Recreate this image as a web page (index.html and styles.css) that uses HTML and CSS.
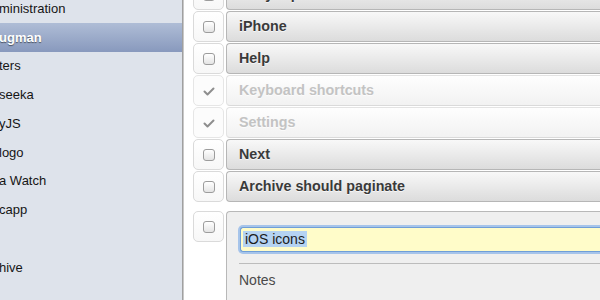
FILE: index.html
```html
<!DOCTYPE html>
<html>
<head>
<meta charset="utf-8">
<link rel="stylesheet" href="styles.css">
</head>
<body>
<div class="app">
  <nav class="sidebar">
    <ul class="projects">
      <li class="project">ministration</li>
      <li class="project is-selected">ugman</li>
      <li class="project">ters</li>
      <li class="project">seeka</li>
      <li class="project">yJS</li>
      <li class="project">logo</li>
      <li class="project">a Watch</li>
      <li class="project">capp</li>
      <li class="project"></li>
      <li class="project">hive</li>
    </ul>
  </nav>
  <main class="tasks">
    <ul class="task-list">
      <li class="task">
        <span class="task-check"><span class="checkbox"></span></span>
        <span class="task-title">Daily reports</span>
      </li>
      <li class="task">
        <span class="task-check"><span class="checkbox"></span></span>
        <span class="task-title">iPhone</span>
      </li>
      <li class="task">
        <span class="task-check"><span class="checkbox"></span></span>
        <span class="task-title">Help</span>
      </li>
      <li class="task is-done">
        <span class="task-check"><svg class="check-icon" viewBox="0 0 12 9" width="12" height="9"><path d="M1.5 4.5 L4.5 7.5 L10.5 1.5" fill="none" stroke="#8e8e8e" stroke-width="2" stroke-linecap="round" stroke-linejoin="round"/></svg></span>
        <span class="task-title">Keyboard shortcuts</span>
      </li>
      <li class="task is-done">
        <span class="task-check"><svg class="check-icon" viewBox="0 0 12 9" width="12" height="9"><path d="M1.5 4.5 L4.5 7.5 L10.5 1.5" fill="none" stroke="#8e8e8e" stroke-width="2" stroke-linecap="round" stroke-linejoin="round"/></svg></span>
        <span class="task-title">Settings</span>
      </li>
      <li class="task">
        <span class="task-check"><span class="checkbox"></span></span>
        <span class="task-title">Next</span>
      </li>
      <li class="task">
        <span class="task-check"><span class="checkbox"></span></span>
        <span class="task-title">Archive should paginate</span>
      </li>
    </ul>
    <div class="task-edit">
      <span class="task-check"><span class="checkbox"></span></span>
      <div class="edit-panel">
        <div class="title-input"><span class="selection">iOS icons</span></div>
        <div class="separator"></div>
        <div class="notes">Notes</div>
      </div>
    </div>
  </main>
</div>
</body>
</html>
```
FILE: styles.css
```css
html, body {
  margin: 0;
  padding: 0;
  width: 600px;
  height: 300px;
  overflow: hidden;
  background: #fff;
  font-family: "Liberation Sans", Arial, sans-serif;
}

.app {
  display: flex;
  height: 300px;
}

.sidebar {
  flex: none;
  width: 182px;
  height: 300px;
  background: #dee3eb;
  border-right: 1px solid #a0a0a0;
  box-shadow: 1px 0 0 #c8c8c8;
  overflow: hidden;
}

.projects {
  list-style: none;
  margin: -6px 0 0 -1px;
  padding: 0;
}

.project {
  height: 28.75px;
  display: flex;
  align-items: center;
  font-size: 13px;
  color: #151515;
  white-space: nowrap;
}

.project.is-selected {
  background: linear-gradient(#afbdd6, #8899bd);
  color: #fff;
  font-weight: bold;
  text-shadow: 0 1px 1px rgba(0, 0, 0, 0.5);
}

.tasks {
  flex: none;
  width: 520px;
  margin-left: 1px;
  padding-left: 9px;
}

.task-list {
  list-style: none;
  margin: -21px 0 0 0;
  padding: 0;
  display: flex;
  flex-direction: column;
  gap: 1px;
}

.task {
  display: flex;
  gap: 2px;
  height: 31px;
}

.task-check {
  flex: none;
  width: 31px;
  height: 31px;
  box-sizing: border-box;
  border: 1px solid #dadada;
  border-radius: 5px;
  background: linear-gradient(#ffffff, #f7f7f7);
  display: flex;
  align-items: center;
  justify-content: center;
}

.checkbox {
  width: 12px;
  height: 12px;
  box-sizing: border-box;
  border: 1px solid #9c9c9c;
  border-radius: 3px;
  background: linear-gradient(#ffffff, #e4e4e4);
}

.check-icon {
  display: block;
  margin-top: 1px;
}

.task-title {
  flex: 1;
  box-sizing: border-box;
  height: 31px;
  border: 1px solid #b6b6b6;
  border-right: 0;
  border-radius: 4px 0 0 4px;
  background: linear-gradient(#f8f8f8, #dcdcdc);
  padding-left: 12px;
  font-size: 14.3px;
  font-weight: bold;
  line-height: 29px;
  color: #3a3a3a;
  text-shadow: 0 1px 0 rgba(255, 255, 255, 0.7);
  white-space: nowrap;
}

.task.is-done .task-check {
  border-color: #e6e6e6;
  background: #fcfcfc;
}

.task.is-done .task-title {
  border-color: #e3e3e3;
  border-bottom-color: #dadada;
  background: linear-gradient(#fefefe, #f2f2f2);
  color: #c3c3c3;
}

.task-edit {
  display: flex;
  gap: 2px;
  margin-top: 9px;
  align-items: flex-start;
}

.edit-panel {
  flex: 1;
  height: 120px;
  border: 1px solid #b8b8b8;
  border-right: 0;
  border-radius: 4px 0 0 0;
  background: #efefef;
  padding: 15px 0 0 12px;
}

.title-input {
  margin-left: 1px;
  height: 23px;
  border: 1px solid #6f9ed8;
  border-right: 0;
  border-radius: 3px 0 0 3px;
  box-shadow: 0 0 0 2px #a6c4ea;
  background: #fffcc9;
  padding-left: 2px;
  font-size: 14px;
  line-height: 23px;
  color: #1c1c1c;
}

.selection {
  background: #b5d3f2;
  padding: 0 2px;
}

.separator {
  margin-top: 11px;
  border-top: 1px solid #bcbcbc;
}

.notes {
  margin-top: 8px;
  font-size: 14px;
  line-height: 17px;
  color: #4a4a4a;
}
```
